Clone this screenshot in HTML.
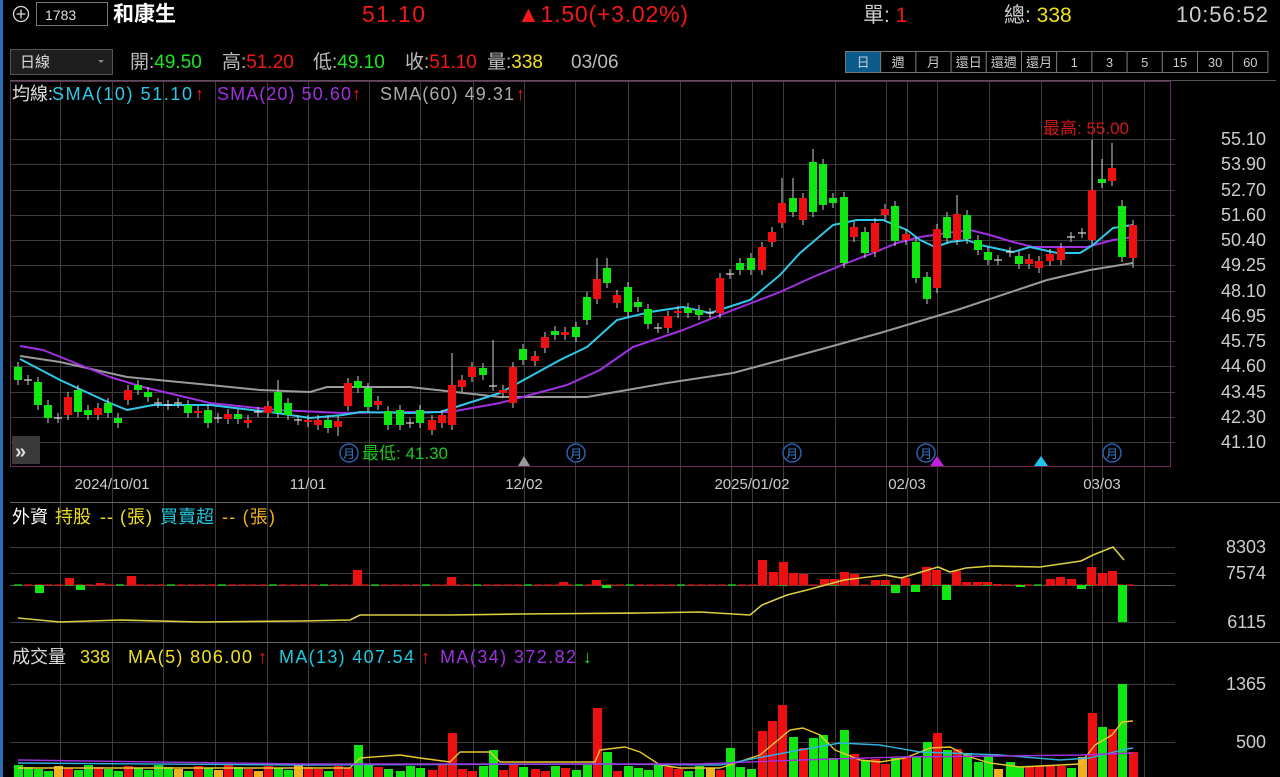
<!DOCTYPE html>
<html><head><meta charset="utf-8">
<style>
body{margin:0;background:#000;width:1280px;height:777px;overflow:hidden;font-family:"Liberation Sans","Noto Sans CJK TC",sans-serif;}
svg{position:absolute;left:0;top:0}
text{font-family:"Liberation Sans","Noto Sans CJK TC",sans-serif}
</style></head><body>
<svg id="s" width="1280" height="777" xmlns="http://www.w3.org/2000/svg">
<rect width="1280" height="777" fill="#000"/>
<rect x="0" y="0" width="3" height="777" fill="#2a6fb5"/>
<g id="grid"></g>
<!-- header -->
<circle cx="21" cy="14" r="7.5" fill="none" stroke="#ddd" stroke-width="1.3"/>
<path d="M16.5 14h9M21 9.5v9" stroke="#ddd" stroke-width="1.3"/>
<rect x="36.5" y="2.5" width="71" height="23" fill="#000" stroke="#777"/>
<text x="45" y="20" fill="#ddd" font-size="14">1783</text>
<text x="113" y="21" fill="#fff" font-size="21" font-weight="bold">和康生</text>
<text x="362" y="22" fill="#f01818" font-size="23" textLength="63">51.10</text>
<text x="517" y="22" fill="#f01818" font-size="23" textLength="171">▲1.50(+3.02%)</text>
<text x="863" y="22" fill="#ccc" font-size="21">單: <tspan fill="#f01818">1</tspan></text>
<text x="1004" y="22" fill="#ccc" font-size="21">總: <tspan fill="#f0e020">338</tspan></text>
<text x="1176" y="22" fill="#ccc" font-size="22" textLength="92">10:56:52</text>
<!-- row2 -->
<rect x="10.5" y="49.5" width="102" height="25" fill="#1e1e1e" stroke="#555"/>
<text x="20" y="67" fill="#ddd" font-size="15">日線</text>
<path d="M98 60l3 3 3-3z" fill="#888"/>
<g font-size="19" fill="#bbb">
<text x="130" y="68">開:<tspan fill="#1ee61e">49.50</tspan></text>
<text x="222" y="68">高:<tspan fill="#f01818">51.20</tspan></text>
<text x="313" y="68">低:<tspan fill="#1ee61e">49.10</tspan></text>
<text x="405" y="68">收:<tspan fill="#f01818">51.10</tspan></text>
<text x="487" y="68">量:<tspan fill="#f0e020">338</tspan></text>
<text x="571" y="68">03/06</text>
</g>
<g id="btns"></g>
<!-- main chart border -->
<line x1="10" y1="80.5" x2="1276" y2="80.5" stroke="#555"/>
<rect x="10.5" y="81.5" width="1160" height="385" fill="none" stroke="#6a2a5a"/>
<g id="lines"></g>
<g id="candles"></g>
<g font-size="18">
<text x="12" y="100" fill="#ddd">均線:</text>
<text x="52" y="100" fill="#30c8e8" textLength="140">SMA(10) 51.10</text>
<text x="195" y="100" fill="#f01818">↑</text>
<text x="217" y="100" fill="#a030e0" textLength="134">SMA(20) 50.60</text>
<text x="352" y="100" fill="#f01818">↑</text>
<text x="380" y="100" fill="#aaa" textLength="134">SMA(60) 49.31</text>
<text x="516" y="100" fill="#f01818">↑</text>
</g>
<text x="1043" y="134" font-size="17" fill="#d01818">最高: 55.00</text>
<g id="axis"></g>
<!-- markers -->
<rect x="12" y="436" width="28" height="28" fill="#3a3a3a"/>
<text x="15" y="458" font-size="20" fill="#ddd" font-weight="bold">»</text>
<text x="362" y="459" font-size="17" fill="#1ec81e">最低: 41.30</text>
<g id="moons"></g>
<path d="M518 466l6-10 6 10z" fill="#999"/>
<path d="M930 466l7-10 7 10z" fill="#c020e0"/>
<path d="M1034 466l7-10 7 10z" fill="#20c8f0"/>
<!-- dates -->
<g font-size="15" fill="#ccc" text-anchor="middle">
<text x="112" y="489">2024/10/01</text><text x="308" y="489">11/01</text><text x="524" y="489">12/02</text><text x="752" y="489">2025/01/02</text><text x="907" y="489">02/03</text><text x="1102" y="489">03/03</text>
</g>
<line x1="10" y1="502.5" x2="1280" y2="502.5" stroke="#666"/>
<g font-size="18">
<text x="12" y="523" fill="#fff">外資</text>
<text x="55" y="523" fill="#f0e020">持股</text>
<text x="100" y="523" fill="#f0e020" textLength="52">-- (張)</text>
<text x="160" y="523" fill="#20c8e0">買賣超</text>
<text x="222" y="523" fill="#f0b020" textLength="53">-- (張)</text>
</g>
<line x1="10" y1="642.5" x2="1280" y2="642.5" stroke="#666"/>
<g font-size="18">
<text x="12" y="663" fill="#ddd">成交量</text>
<text x="80" y="663" fill="#f0e020">338</text>
<text x="128" y="663" fill="#f0e020" textLength="124">MA(5) 806.00</text>
<text x="258" y="663" fill="#f01818">↑</text>
<text x="279" y="663" fill="#20c8e0" textLength="135">MA(13) 407.54</text>
<text x="421" y="663" fill="#f01818">↑</text>
<text x="440" y="663" fill="#a030e0" textLength="136">MA(34) 372.82</text>
<text x="583" y="663" fill="#1ee61e">↓</text>
</g>
<g id="p2"></g>
<g id="p3"></g>
</svg>
<script>
var NS="http://www.w3.org/2000/svg";
function el(p,t,a){var e=document.createElementNS(NS,t);for(var k in a)e.setAttribute(k,a[k]);document.getElementById(p).appendChild(e);return e;}
var G="#3c3c3c";
[60,112,163,215,267,308,369,420,473,524,575,628,680,731,752,783,835,886,907,937,989,1041,1092,1102,1144].forEach(function(x){el("grid","line",{x1:x+.5,y1:82,x2:x+.5,y2:777,stroke:G});});
var prices=["55.10","53.90","52.70","51.60","50.40","49.25","48.10","46.95","45.75","44.60","43.45","42.30","41.10"];
prices.forEach(function(p,i){var y=Math.round(139+i*25.25);el("grid","line",{x1:10,y1:y+.5,x2:1175,y2:y+.5,stroke:G});var t=el("axis","text",{x:1266,y:y+6,"font-size":18,fill:"#ccc","text-anchor":"end"});t.textContent=p;});
[[547,"8303"],[573,"7574"],[585,""],[622,"6115"],[684,"1365"],[742,"500"]].forEach(function(a){el("grid","line",{x1:10,y1:a[0]+.5,x2:1175,y2:a[0]+.5,stroke:a[1]?G:"#555"});if(a[1]){var t=el("axis","text",{x:1266,y:a[0]+6,"font-size":18,fill:"#ccc","text-anchor":"end"});t.textContent=a[1];}});
var bl=["日","週","月","還日","還週","還月","1","3","5","15","30","60"];
var bx=845;bl.forEach(function(b,i){var w=35.2;el("btns","rect",{x:bx+i*w+.5,y:51.5,width:w,height:21,fill:i==0?"#0a5a8c":"#000",stroke:"#777"});var t=el("btns","text",{x:bx+i*w+w/2+.5,y:67,"font-size":13,fill:"#ccc","text-anchor":"middle"});t.textContent=b;});
[349,576,792,926,1112].forEach(function(x){el("moons","circle",{cx:x,cy:453,r:9,fill:"#000",stroke:"#2a60b0","stroke-width":1.5});var t=el("moons","text",{x:x,y:458,"font-size":12,fill:"#3a80d0","text-anchor":"middle"});t.textContent="月";});
function pl(g,pts,c,w){el(g,"polyline",{points:pts.map(function(p){return p.join(",")}).join(" "),fill:"none",stroke:c,"stroke-width":w||2,"stroke-linejoin":"round"});}
pl("lines",[[20,356],[60,362],[127,377],[210,385],[260,390],[310,392],[327,387],[410,387],[500,397],[587,397],[667,383],[733,373],[800,355],[880,333],[957,310],[1047,280],[1090,270],[1133,263]],"#9a9a9a");
pl("lines",[[20,346],[43,350],[110,377],[143,387],[210,403],[277,410],[343,413],[410,412],[450,412],[500,403],[567,385],[600,370],[633,347],[683,330],[733,310],[780,292],[813,277],[847,263],[873,253],[897,243],[920,237],[947,233],[970,230],[990,235],[1013,242],[1033,247],[1063,247],[1087,247],[1113,240],[1133,237]],"#a030e0");
pl("lines",[[20,359],[60,380],[110,403],[127,410],[153,405],[210,405],[277,413],[310,418],[343,415],[360,412],[410,413],[440,412],[500,393],[560,360],[587,347],[617,320],[650,312],[683,307],[710,313],[750,300],[780,275],[800,253],[833,225],[857,220],[883,220],[907,230],[920,240],[935,247],[950,242],[967,240],[980,245],[1013,252],[1030,247],[1057,253],[1080,253],[1093,245],[1113,228],[1133,225]],"#30c8e8");
var C=[[18,367,380],[28,380,380],[38,382,405],[48,405,418],[58,418,418],[68,415,397],[78,390,412],[88,410,415],[98,415,408],[108,403,413],[118,418,423],[128,400,390],[138,385,390],[148,392,397],[158,403,403],[168,405,405],[178,403,403],[188,405,413],[198,413,411],[208,410,423],[218,418,418],[228,419,414],[238,414,419],[248,423,420],[258,412,412],[268,413,406],[278,392,413,380],[288,403,415],[298,420,420],[308,422,420],[318,425,420],[328,420,428],[338,427,421,,436],[348,406,383,378],[358,381,388],[368,388,407],[378,405,401],[388,411,425],
[400,410,425],[410,423,423],[420,410,423],[432,430,420],[442,423,415],[452,425,385,353],[462,387,380],[472,377,367],[483,368,375],[493,386,386,340],[503,393,390],[513,403,367],[523,349,360],[535,361,356],[545,348,337],[555,331,335],[565,335,332],[576,327,337],[587,297,320],[597,299,279,258],[607,268,283,258],[617,303,295],[628,287,312],[638,302,307],[648,309,324],[658,328,328],[668,328,316],[678,313,311],[688,308,313],[699,310,315],[710,313,313],[720,313,278],[730,274,274],[740,263,270],[751,258,270],[762,270,247],[772,242,232],[782,223,203,178],
[793,198,212,178],[803,220,198],[813,162,212,149],[823,164,205],[833,198,203],[844,197,263],[854,237,227],[865,232,253],[875,252,223],[885,215,209],[895,206,241],[906,240,234],[916,242,278],[927,277,299],[937,288,229],[947,217,238],[957,240,214,195],[967,215,239],[978,240,250],[988,252,260],[998,260,260],[1010,252,252],[1019,256,264],[1029,264,259],[1039,268,261],[1050,261,254],[1061,260,248],[1071,237,237],[1082,233,233],[1092,240,190,140],[1102,179,183,159],[1112,181,168,143],[1122,206,257,200],[1133,258,225,220,268]];
C.forEach(function(c){var x=c[0],o=c[1],cl=c[2];var top=Math.min(o,cl),bot=Math.max(o,cl);var h=c[3]||top-5,l=c[4]||bot+5;
var up=cl<o, doji=Math.abs(o-cl)<1;var col=doji?"#ccc":(up?"#ee1010":"#10e610");
el("candles","line",{x1:x,y1:h,x2:x,y2:l,stroke:"#ccc","stroke-width":1});
if(doji){el("candles","line",{x1:x-4,y1:o,x2:x+4,y2:o,stroke:"#ddd","stroke-width":1.2});}
else el("candles","rect",{x:x-4,y:top,width:8,height:bot-top,fill:col});});
var B=[[39,8],[69,-7],[80,5],[100,-2],[131,-9],[357,-15],[451,-8],[563,-3],[596,-5],[606,3],[762,-25],[773,-13],[783,-23],[793,-12],[803,-11],[824,-6],[834,-6],[844,-13],[854,-11],[875,-5],[885,-5],[895,8],[905,-7],[915,7],[926,-18],[936,-15],[946,15],[956,-14],[966,-3],[977,-3],[987,-3],[997,-1],[1020,2],[1050,-6],[1060,-8],[1071,-6],[1081,4],[1091,-18],[1102,-12],[1112,-14],[1122,37]];
for(var x=18;x<1130;x+=10.2){el("p2","line",{x1:x-4,y1:585,x2:x+4,y2:585,stroke:(Math.round(x)%3?"#c01010":"#10c010"),"stroke-width":1.5});}
B.forEach(function(b){var v=b[1];el("p2","rect",{x:b[0]-4,y:v<0?585+v:585,width:9,height:Math.abs(v),fill:v<0?"#ee1010":"#10e610"});});
pl("p2",[[18,618],[60,622],[120,620],[200,622],[300,621],[350,620],[360,615],[450,615],[520,614],[640,613],[700,612],[750,615],[762,605],[787,595],[807,590],[844,580],[885,575],[901,578],[938,567],[950,572],[966,568],[991,566],[1040,567],[1081,561],[1093,555],[1113,547],[1124,560]],"#d8d040",1.6);
var V={359:745,451:733,492:750,596:708,606:752,726:748,762:731,773:721,782:705,792:737,803:748,813:738,824:735,834:758,844:730,854:754,864:760,875:759,885:764,895:758,905:757,915:757,926:742,936:733,946:750,956:749,966:753,977:762,987:756,997:769,1007:762,1018:767,1028:767,1038:766,1048:765,1081:757,1091:713,1102:727,1112:729,1122:684,1132:752};
var keys=Object.keys(V).map(Number);
C.forEach(function(c,i){var x=c[0];var y=765+((i*37)%7);var best=null;keys.forEach(function(k){if(Math.abs(k-x)<5)best=k;});if(best!==null)y=V[best];
var up=c[2]<c[1];var doji=Math.abs(c[1]-c[2])<1;var col=doji?(i%4==0?"#f0b020":"#10e610"):(up?"#ee1010":"#10e610");el("p3","rect",{x:x-4,y:y,width:9,height:777-y,fill:col});});
pl("p3",[[18,768],[350,768],[360,758],[400,755],[420,758],[450,762],[460,752],[490,752],[500,762],[595,762],[600,750],[625,747],[640,752],[660,765],[680,768],[720,768],[760,755],[790,730],[803,728],[820,735],[835,750],[860,760],[880,762],[905,758],[930,748],[950,747],[970,757],[990,763],[1020,767],[1080,764],[1095,745],[1112,735],[1122,722],[1133,721]],"#e8c830",1.4);
pl("p3",[[18,763],[300,765],[600,764],[720,765],[800,750],[840,743],[880,745],[920,752],[1000,755],[1060,760],[1090,758],[1122,750],[1133,748]],"#30b0e0",1.4);
pl("p3",[[18,760],[300,764],[700,764],[800,760],[900,757],[1000,756],[1080,755],[1133,753]],"#a030e0",1.4);
</script>
</body></html>
